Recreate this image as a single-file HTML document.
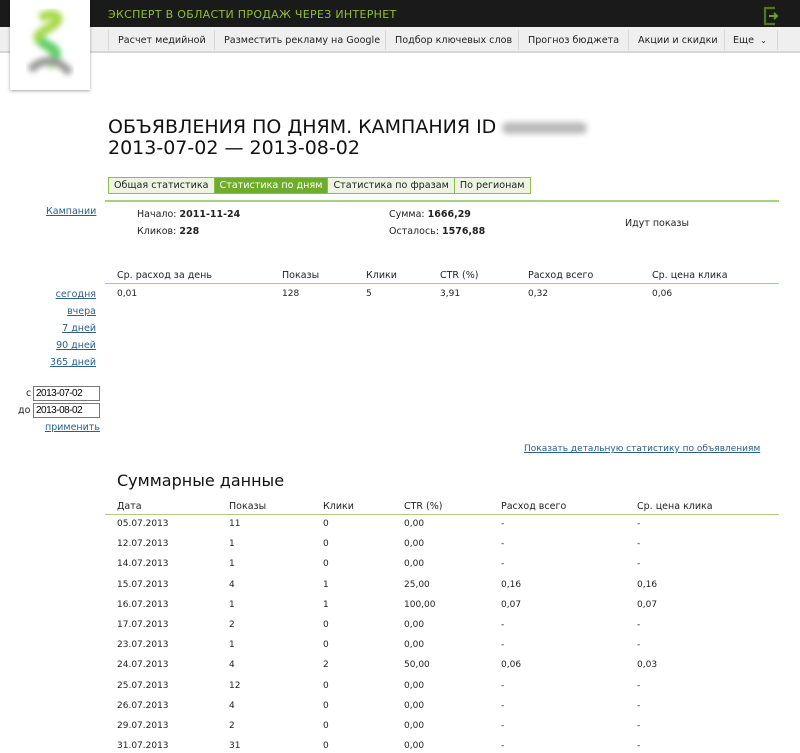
<!DOCTYPE html>
<html><head><meta charset="utf-8"><style>
*{margin:0;padding:0;box-sizing:border-box}
body{width:800px;height:753px;overflow:hidden;background:#fff;font-family:"DejaVu Sans","Liberation Sans",sans-serif;font-size:9.5px;color:#222;position:relative}
.a{position:absolute;white-space:nowrap}
#top{position:absolute;left:0;top:0;width:800px;height:27px;background:#1a1a1a}
#nav{position:absolute;left:0;top:27px;width:800px;height:26px;background:#efefef;border-bottom:2px solid #d6d6d6}
.ni{position:absolute;top:8px;font-size:9.6px;color:#222}
.sep{position:absolute;top:3px;width:1px;height:20px;background:#d8d8d8}
#logo{position:absolute;left:10px;top:0;width:80px;height:90px;background:#fff;box-shadow:0 1px 3px rgba(0,0,0,.35)}
.lk{color:#2a5f8a;text-decoration:underline}
.tabs{position:absolute;left:108px;top:177px;height:17px;border:1px solid #8bbf4a;display:flex;background:#eef3e4}
.tabs div{padding:0 5px;line-height:15px;font-size:9.6px;border-right:1px solid #8bbf4a}
.tabs div:last-child{border-right:none}
.tabs .on{background:#6eac2c;color:#fff}
.gl{position:absolute;height:2px;background:#a9d17c}
input{position:absolute;width:67px;height:15px;border:1px solid #777;font-family:"Liberation Sans",sans-serif;font-size:10px;padding-left:2px;letter-spacing:-.5px}
</style></head><body>
<div id="top"></div>
<div class="a" style="left:108px;top:8px;color:#8fbf3a;font-size:11px;letter-spacing:.3px">ЭКСПЕРТ В ОБЛАСТИ ПРОДАЖ ЧЕРЕЗ ИНТЕРНЕТ</div>
<svg class="a" style="left:763px;top:6px" width="18" height="20" viewBox="0 0 18 20"><path d="M12 2H2v16h10" fill="none" stroke="#4d7a1e" stroke-width="2.2"/><path d="M6 10h8M11 7l3 3-3 3" fill="none" stroke="#6a9e2a" stroke-width="2"/></svg>
<div id="nav">
<div class="sep" style="left:108px"></div>
<div class="ni" style="left:118px">Расчет медийной</div>
<div class="sep" style="left:214px"></div>
<div class="ni" style="left:224px">Разместить рекламу на Google</div>
<div class="sep" style="left:385px"></div>
<div class="ni" style="left:395px">Подбор ключевых слов</div>
<div class="sep" style="left:518px"></div>
<div class="ni" style="left:528px">Прогноз бюджета</div>
<div class="sep" style="left:628px"></div>
<div class="ni" style="left:638px">Акции и скидки</div>
<div class="sep" style="left:724px"></div>
<div class="ni" style="left:733px">Еще &nbsp;<span style="font-size:8px">⌄</span></div>
<div class="sep" style="left:777px"></div>
</div>
<div id="logo"><svg width="80" height="90" viewBox="0 0 80 90"><defs><filter id="b"><feGaussianBlur stdDeviation="3"/></filter></defs><g filter="url(#b)"><path d="M30 18c15-8 25 0 12 8s-20 10-8 18 16 14 4 22" fill="none" stroke="#a7d94a" stroke-width="9"/><path d="M30 40c10 10 20 6 14 22" fill="none" stroke="#5fd06a" stroke-width="10"/><path d="M20 70c10-10 25-15 40 3" fill="none" stroke="#999" stroke-width="8"/></g></svg></div>
<div class="a" style="left:108px;top:117px;font-size:19px;line-height:21px;color:#111">ОБЪЯВЛЕНИЯ ПО ДНЯМ. КАМПАНИЯ ID <span style="display:inline-block;width:85px;height:12px;background:#bbb;border-radius:6px;filter:blur(3px);vertical-align:middle"></span><br>2013-07-02 — 2013-08-02</div>
<div class="tabs"><div>Общая статистика</div><div class="on">Статистика по дням</div><div>Статистика по фразам</div><div>По регионам</div></div>
<div class="gl" style="left:105px;top:200px;width:674px"></div>
<div class="a lk" style="left:46px;top:206px">Кампании</div>
<div class="a" style="left:137px;top:209px">Начало: <b>2011-11-24</b></div>
<div class="a" style="left:137px;top:226px">Кликов: <b>228</b></div>
<div class="a" style="left:389px;top:209px">Сумма: <b>1666,29</b></div>
<div class="a" style="left:389px;top:226px">Осталось: <b>1576,88</b></div>
<div class="a" style="left:625px;top:218px">Идут показы</div>
<div class="a" style="left:117px;top:270px">Ср. расход за день</div>
<div class="a" style="left:282px;top:270px">Показы</div>
<div class="a" style="left:366px;top:270px">Клики</div>
<div class="a" style="left:440px;top:270px">CTR (%)</div>
<div class="a" style="left:528px;top:270px">Расход всего</div>
<div class="a" style="left:652px;top:270px">Ср. цена клика</div>
<div class="gl" style="left:105px;top:283px;width:674px;height:1px"></div>
<div class="a" style="left:117px;top:289px;font-size:9px">0,01</div>
<div class="a" style="left:282px;top:289px;font-size:9px">128</div>
<div class="a" style="left:366px;top:289px;font-size:9px">5</div>
<div class="a" style="left:440px;top:289px;font-size:9px">3,91</div>
<div class="a" style="left:528px;top:289px;font-size:9px">0,32</div>
<div class="a" style="left:652px;top:289px;font-size:9px">0,06</div>
<div class="a lk" style="right:704px;top:289px">сегодня</div>
<div class="a lk" style="right:704px;top:306px">вчера</div>
<div class="a lk" style="right:704px;top:323px">7 дней</div>
<div class="a lk" style="right:704px;top:340px">90 дней</div>
<div class="a lk" style="right:704px;top:357px">365 дней</div>
<div class="a" style="left:26px;top:388px">с</div>
<input style="left:33px;top:386px" value="2013-07-02">
<div class="a" style="left:18px;top:405px">до</div>
<input style="left:33px;top:403px" value="2013-08-02">
<div class="a lk" style="left:45px;top:422px">применить</div>
<div class="a lk" style="left:524px;top:444px;font-size:9px">Показать детальную статистику по объявлениям</div>
<div class="a" style="left:117px;top:471px;font-size:16px;color:#111">Суммарные данные</div>
<div class="a" style="left:117px;top:501px">Дата</div>
<div class="a" style="left:229px;top:501px">Показы</div>
<div class="a" style="left:323px;top:501px">Клики</div>
<div class="a" style="left:404px;top:501px">CTR (%)</div>
<div class="a" style="left:501px;top:501px">Расход всего</div>
<div class="a" style="left:637px;top:501px">Ср. цена клика</div>
<div class="gl" style="left:105px;top:514px;width:674px;height:1px"></div>
<div id="rows"></div>
<script>
var d=[["05.07.2013","11","0","0,00","-","-"],["12.07.2013","1","0","0,00","-","-"],["14.07.2013","1","0","0,00","-","-"],["15.07.2013","4","1","25,00","0,16","0,16"],["16.07.2013","1","1","100,00","0,07","0,07"],["17.07.2013","2","0","0,00","-","-"],["23.07.2013","1","0","0,00","-","-"],["24.07.2013","4","2","50,00","0,06","0,03"],["25.07.2013","12","0","0,00","-","-"],["26.07.2013","4","0","0,00","-","-"],["29.07.2013","2","0","0,00","-","-"],["31.07.2013","31","0","0,00","-","-"]];
var x=[117,229,323,404,501,637],h="";
d.forEach(function(r,i){r.forEach(function(c,j){h+='<div class="a" style="font-size:9px;left:'+x[j]+'px;top:'+(519+i*20.2)+'px">'+c+'</div>';});});
document.getElementById('rows').innerHTML=h;
</script>
</body></html>
